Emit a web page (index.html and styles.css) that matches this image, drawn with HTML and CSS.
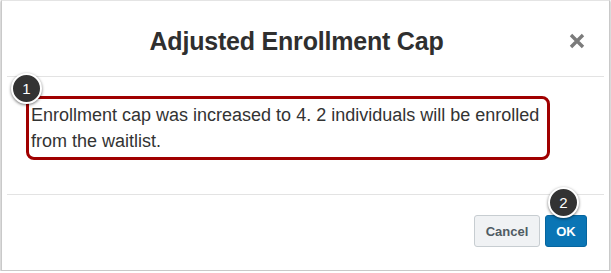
FILE: index.html
```html
<!DOCTYPE html>
<html lang="en">
<head>
<meta charset="utf-8">
<title>Adjusted Enrollment Cap</title>
<link rel="stylesheet" href="styles.css">
</head>
<body>
<div class="dialog">
  <div class="header">
    <h1 class="title">Adjusted Enrollment Cap</h1>
    <span class="close" aria-label="Close">
      <svg width="16" height="16" viewBox="0 0 16 16"><path d="M2 2 L14 14 M14 2 L2 14" stroke="#7b7b7b" stroke-width="3.4" stroke-linecap="butt" fill="none"/></svg>
    </span>
  </div>
  <div class="content">
    <div class="highlight">
      <span class="badge badge-one">1</span>
      <p class="message">Enrollment cap was increased to 4. 2 individuals will be enrolled from the waitlist.</p>
    </div>
  </div>
  <div class="footer">
    <button class="btn btn-cancel">Cancel</button>
    <button class="btn btn-ok">OK<span class="badge badge-two">2</span></button>
  </div>
</div>
</body>
</html>
```
FILE: styles.css
```css
html, body {
  margin: 0;
  padding: 0;
  background: #ffffff;
  font-family: "Liberation Sans", Arial, Helvetica, sans-serif;
}

.dialog {
  box-sizing: border-box;
  width: 609px;
  height: 271px;
  margin-left: 1px;
  border: 1px solid #c9c9c9;
  border-top-color: #e4e4e4;
  background: #ffffff;
  box-shadow: 0 1px 2px rgba(0, 0, 0, 0.45);
  display: flex;
  flex-direction: column;
}

.header {
  box-sizing: border-box;
  height: 76px;
  margin: 0 5px;
  border-bottom: 1px solid #e3e3e3;
  display: flex;
  align-items: center;
  padding: 5px 18px 0 0;
  position: relative;
}

.title {
  flex: 1;
  margin: 0;
  text-align: center;
  font-size: 25px;
  font-weight: bold;
  color: #2f2f2f;
  letter-spacing: -0.2px;
}

.close {
  position: absolute;
  right: 19px;
  top: 32px;
  width: 16px;
  height: 16px;
  line-height: 0;
}

.content {
  box-sizing: border-box;
  height: 118px;
  margin: 0 5px;
  padding: 19px 0 0 19px;
  border-bottom: 1px solid #e3e3e3;
}

.highlight {
  position: relative;
  box-sizing: border-box;
  width: 524px;
  border: 3px solid #a00000;
  border-radius: 8px;
  padding: 4px 0 3px 2px;
}

.message {
  margin: 0;
  font-size: 18px;
  line-height: 25.5px;
  color: #333333;
}

.footer {
  flex: 1;
  display: flex;
  justify-content: flex-end;
  align-items: flex-start;
  gap: 5px;
  padding: 20px 22px 0 0;
}

.btn {
  box-sizing: border-box;
  height: 32px;
  border-radius: 3px;
  font-family: "Liberation Sans", Arial, Helvetica, sans-serif;
  font-size: 13px;
  font-weight: bold;
  padding: 0;
  cursor: pointer;
}

.btn-cancel {
  width: 66px;
  background: #f0f2f4;
  border: 1px solid #c7cdd1;
  color: #4f5b63;
}

.btn-ok {
  position: relative;
  width: 42px;
  background: #0a75b5;
  border: 1px solid #06659e;
  color: #ffffff;
}

.badge {
  position: absolute;
  box-sizing: border-box;
  width: 31px;
  height: 31px;
  border-radius: 50%;
  background: #333333;
  border: 2px solid #ffffff;
  box-shadow: 0 1px 3px rgba(0, 0, 0, 0.55);
  color: #ffffff;
  font-family: "Liberation Sans", Arial, Helvetica, sans-serif;
  font-size: 15px;
  font-weight: normal;
  display: flex;
  align-items: center;
  justify-content: center;
}

.badge-one {
  left: -18px;
  top: -26px;
}

.badge-two {
  left: 2px;
  top: -29px;
}
```
